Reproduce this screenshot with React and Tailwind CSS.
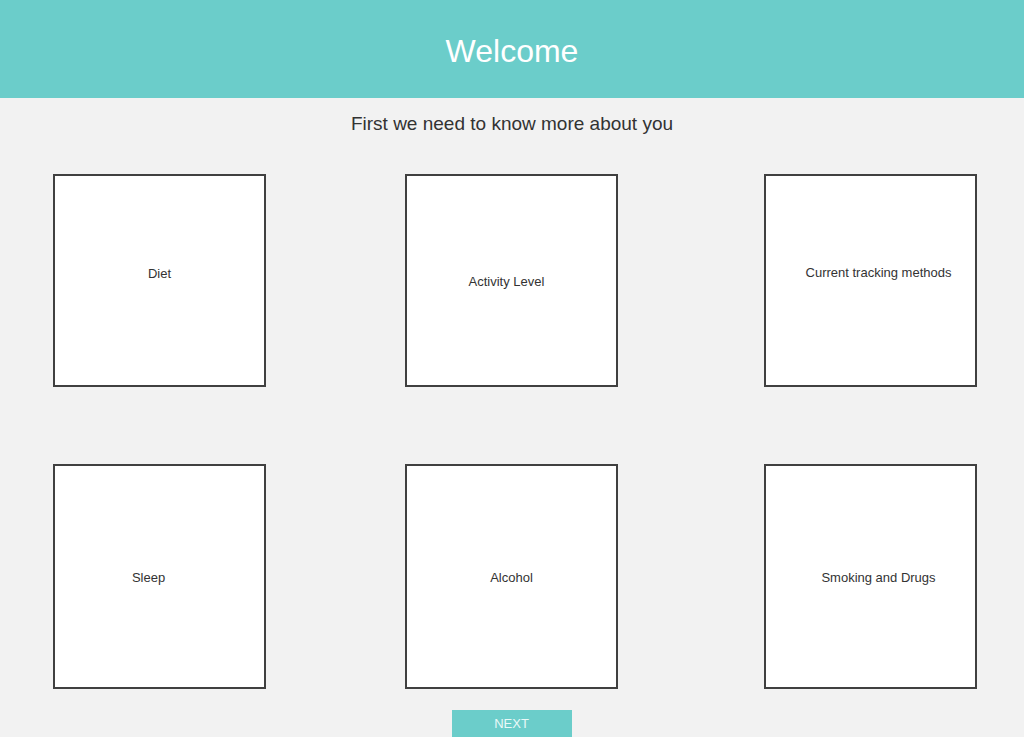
import React from 'react';

const Tile = ({ label, className }) => {
  return (
    <div className={`bg-white border-2 border-[#404040] flex ${className}`}>
      <p className="text-[13px] leading-[15px] text-[#333333]">{label}</p>
    </div>
  );
};

const App = () => {
  return (
    <div className="min-h-screen bg-[#f2f2f2] font-['Liberation_Sans',Arial,sans-serif]">
      <header className="h-[98px] bg-[#6bcdca] flex items-center justify-center">
        <h1 className="text-[32px] text-white leading-none pt-[3px]">Welcome</h1>
      </header>

      <h2 className="text-[19px] text-[#333333] text-center leading-none mt-[16px]">First we need to know more about you</h2>

      {/* Row 1 */}
      <div className="flex mt-[41px]">
        <Tile label="Diet" className="ml-[53px] w-[213px] h-[213px] justify-center pt-[90px]" />
        <Tile label="Activity Level" className="ml-[139px] w-[213px] h-[213px] justify-center pt-[98px] pr-[10px]" />
        <Tile label="Current tracking methods" className="ml-[146px] w-[213px] h-[213px] justify-center pt-[89px] pl-[16px]" />
      </div>

      {/* Row 2 */}
      <div className="flex mt-[77px]">
        <Tile label="Sleep" className="ml-[53px] w-[213px] h-[225px] justify-center pt-[104px] pr-[22px]" />
        <Tile label="Alcohol" className="ml-[139px] w-[213px] h-[225px] justify-center pt-[104px]" />
        <Tile label="Smoking and Drugs" className="ml-[146px] w-[213px] h-[225px] justify-center pt-[104px] pl-[16px]" />
      </div>

      <div className="flex justify-center mt-[21px]">
        <button className="w-[120px] h-[30px] bg-[#6bcdca] text-[#eaf9f8] text-[13px] ml-[-1px] pb-[2px]">NEXT</button>
      </div>
    </div>
  );
};

export default App;
